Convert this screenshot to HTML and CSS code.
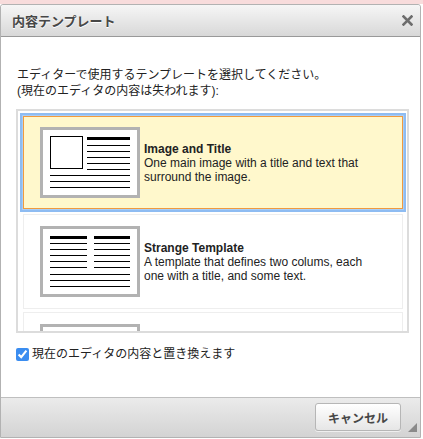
FILE: index.html
```html
<!DOCTYPE html>
<html lang="ja">
<head>
  <meta charset="UTF-8">
  <title>内容テンプレート</title>
  <link rel="stylesheet" href="styles.css">
</head>
<body>
  <div class="top-strip"></div>

  <div class="dialog">
    <div class="dlg-head">
      <span class="dlg-title">内容テンプレート</span>
      <a class="dlg-close" title="閉じる">
        <svg width="11" height="11" viewBox="0 0 11 11">
          <path d="M1.5 1.5 L9.5 9.5 M9.5 1.5 L1.5 9.5" stroke="#6d6d6d" stroke-width="2.6" stroke-linecap="square"/>
        </svg>
      </a>
    </div>

    <div class="dlg-body">
      <p class="intro">エディターで使用するテンプレートを選択してください。<br>(現在のエディタの内容は失われます):</p>

      <div class="tpl-list">
        <a class="tpl-item selected">
          <span class="tpl-thumb">
            <svg width="94" height="65" viewBox="0 0 94 65">
              <rect x="7.5" y="6.5" width="32" height="32" fill="none" stroke="#000"/>
              <rect x="44" y="7" width="43" height="3"/>
              <rect x="44" y="15" width="43" height="1"/>
              <rect x="44" y="21" width="43" height="1"/>
              <rect x="44" y="27" width="43" height="1"/>
              <rect x="44" y="33" width="43" height="1"/>
              <rect x="44" y="39" width="43" height="1"/>
              <rect x="7" y="45" width="80" height="1"/>
              <rect x="7" y="51" width="80" height="1"/>
              <rect x="7" y="57" width="80" height="1"/>
            </svg>
          </span>
          <span class="tpl-info">
            <strong>Image and Title</strong>
            One main image with a title and text that surround the image.
          </span>
        </a>

        <a class="tpl-item">
          <span class="tpl-thumb">
            <svg width="94" height="65" viewBox="0 0 94 65">
              <rect x="7" y="7" width="37" height="3"/>
              <rect x="51" y="7" width="36" height="3"/>
              <rect x="7" y="14" width="37" height="1"/>
              <rect x="7" y="20" width="37" height="1"/>
              <rect x="7" y="26" width="37" height="1"/>
              <rect x="7" y="32" width="37" height="1"/>
              <rect x="7" y="38" width="37" height="1"/>
              <rect x="51" y="14" width="36" height="1"/>
              <rect x="51" y="20" width="36" height="1"/>
              <rect x="51" y="26" width="36" height="1"/>
              <rect x="51" y="32" width="36" height="1"/>
              <rect x="51" y="38" width="36" height="1"/>
              <rect x="7" y="45" width="80" height="1"/>
              <rect x="7" y="51" width="80" height="1"/>
              <rect x="7" y="57" width="80" height="1"/>
            </svg>
          </span>
          <span class="tpl-info">
            <strong>Strange Template</strong>
            A template that defines two colums, each one with a title, and some text.
          </span>
        </a>

        <!-- third template, scrolled mostly out of view -->
        <a class="tpl-item">
          <span class="tpl-thumb">
            <svg width="94" height="65" viewBox="0 0 94 65"></svg>
          </span>
        </a>
      </div>

      <label class="replace">
        <input type="checkbox" checked>
        <span>現在のエディタの内容と置き換えます</span>
      </label>
    </div>

    <div class="dlg-foot">
      <button class="btn">キャンセル</button>
      <span class="grip"></span>
    </div>
  </div>
</body>
</html>
```

FILE: styles.css
```css
html, body {
  margin: 0;
  padding: 0;
}

body {
  width: 423px;
  height: 439px;
  overflow: hidden;
  background: #fff;
  color: #222;
  font-family: "Liberation Sans", "Noto Sans CJK JP", sans-serif;
  font-size: 12px;
}

.top-strip {
  height: 4px;
  background: #f8dcdc;
}

.dialog {
  position: relative;
  width: 421px;
  height: 434px;
  box-sizing: border-box;
  border: 1px solid #b2b2b2;
  border-radius: 3px 3px 0 0;
  display: flex;
  flex-direction: column;
  background: #fff;
}

.dlg-head {
  height: 31px;
  border-bottom: 1px solid #999;
  background: linear-gradient(#f6f6f6, #d8d8d8);
  display: flex;
  align-items: center;
  justify-content: space-between;
  padding: 0 7px 0 11px;
  border-radius: 3px 3px 0 0;
}

.dlg-title {
  font-size: 13px;
  font-weight: bold;
  color: #474747;
  text-shadow: 0 1px 0 #fff;
}

.dlg-close {
  display: flex;
  width: 11px;
  height: 11px;
  margin-top: -1px;
  cursor: pointer;
}

.dlg-body {
  flex: 1;
  padding: 30px 11px 0 15px;
}

.intro {
  margin: 0 0 10px 1px;
  line-height: 16px;
}

.tpl-list {
  height: 224px;
  box-sizing: border-box;
  width: 393px;
  border: 2px solid #dcdcdc;
  padding: 5px 4px 0 5px;
  overflow: hidden;
  display: flex;
  flex-direction: column;
  gap: 3px;
}

.tpl-item {
  flex: none;
  height: 95px;
  box-sizing: border-box;
  border: 1px solid #eee;
  padding: 0 0 0 16px;
  display: flex;
  align-items: center;
  gap: 4px;
  color: #222;
  cursor: pointer;
}

.tpl-item.selected {
  height: 93px;
  border-color: #f19b3e;
  background: #fff8cc;
  box-shadow: 0 0 0 1px #a8cdf7, 0 0 0 3px #8ebcf2;
  margin-bottom: 2px;
}

.tpl-thumb {
  flex: none;
  display: flex;
  width: 94px;
  height: 65px;
  border: 3px solid #b2b2b2;
  background: #fff;
}

.tpl-info {
  width: 232px;
  line-height: 14px;
}

.tpl-info strong {
  display: block;
}

.replace {
  display: flex;
  align-items: center;
  gap: 3px;
  margin-top: 13px;
  line-height: 16px;
}

.replace input {
  margin: 0;
  width: 13px;
  height: 13px;
  accent-color: #3b8df0;
}

.dlg-foot {
  height: 40px;
  box-sizing: border-box;
  border-top: 1px solid #bfbfbf;
  background: linear-gradient(#ebebeb, #d3d3d3);
  display: flex;
  justify-content: flex-end;
  align-items: flex-start;
  padding: 5px 19px 0 0;
}

.btn {
  width: 86px;
  height: 28px;
  border: 1px solid #b6b6b6;
  border-radius: 3px;
  background: linear-gradient(#fff, #e6e6e6);
  box-shadow: 0 1px 0 rgba(255, 255, 255, 0.6);
  font-family: "Liberation Sans", "Noto Sans CJK JP", sans-serif;
  font-size: 12px;
  font-weight: bold;
  color: #474747;
  padding: 0;
}

.grip {
  position: absolute;
  right: 3px;
  bottom: 5px;
  width: 0;
  height: 0;
  border-left: 9px solid transparent;
  border-bottom: 9px solid #8a8a8a;
}
```
